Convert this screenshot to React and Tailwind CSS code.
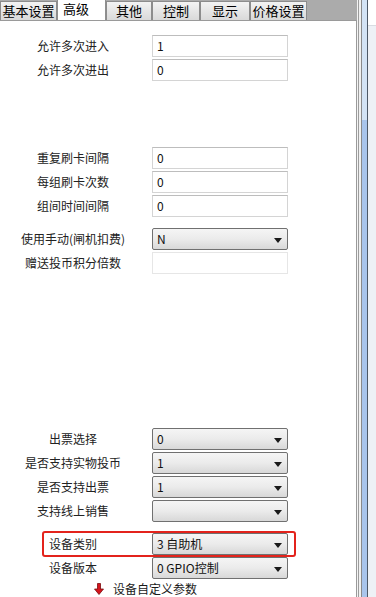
const font = { fontFamily: '"Noto Sans CJK SC", "Liberation Sans", sans-serif' };

const tabs = [
	{ label: "基本设置", w: "w-[57px]" },
	{ label: "高级", w: "w-[49px]", active: true },
	{ label: "其他", w: "w-[46px]" },
	{ label: "控制", w: "w-[48px]" },
	{ label: "显示", w: "w-[50px]" },
	{ label: "价格设置", w: "w-[57px]" },
];

function Caret() {
	return (
		<svg width="8" height="5" viewBox="0 0 8 5" className="absolute right-[5px] top-[9px]">
			<path d="M0 0 H8 L4 5 Z" fill="#1a1a1a" />
		</svg>
	);
}

function Label({ children }) {
	return (
		<div className="w-[146px] shrink-0 text-center text-[12px] leading-[22px] text-[#222]">
			{children}
		</div>
	);
}

function TextBox({ value, faint }) {
	return (
		<div
			className={`ml-[6px] h-[22px] w-[136px] border bg-white pl-[4px] text-[12px] leading-[20px] text-[#111] ${
				faint ? "border-[#e6e6e6]" : "border-[#d4d4d4] border-t-[#bdbdbd]"
			}`}
		>
			{value}
		</div>
	);
}

function Select({ value }) {
	return (
		<div className="relative ml-[6px] h-[22px] w-[136px] rounded-[2px] border border-[#707070] bg-gradient-to-b from-[#f5f5f5] via-[#ebebeb] to-[#d8d8d8] pl-[4px] text-[12px] leading-[20px] text-[#111]">
			{value}
			<Caret />
		</div>
	);
}

function Row({ label, children, className = "" }) {
	return (
		<div className={`flex h-[22px] items-center ${className}`}>
			<Label>{label}</Label>
			{children}
		</div>
	);
}

export default function App() {
	return (
		<div className="flex h-[597px] w-[376px] overflow-hidden bg-white" style={font}>
			<div className="flex w-[357px] flex-col">
				{/* tab strip */}
				<div className="flex h-[20px] items-end bg-[#ababab]">
					{tabs.map((t) =>
						t.active ? (
							<div
								key={t.label}
								className={`${t.w} h-[20px] border-x border-[#8f8f8f] bg-white pl-[5px] text-[13px] leading-[18px] text-black`}
							>
								{t.label}
							</div>
						) : (
							<div
								key={t.label}
								className={`${t.w} h-[19px] border border-b-0 border-[#8c8c8c] bg-gradient-to-b from-[#f3f3f3] to-[#d9d9d9] text-center text-[13px] leading-[18px] text-black`}
							>
								{t.label}
							</div>
						)
					)}
				</div>
				{/* panel */}
				<div className="flex flex-1 flex-col border-r border-t border-[#9a9a9a] bg-white pt-[14px]">
					<Row label="允许多次进入">
						<TextBox value="1" />
					</Row>
					<Row label="允许多次进出" className="mt-[2px]">
						<TextBox value="0" />
					</Row>

					<Row label="重复刷卡间隔" className="mt-[66px]">
						<TextBox value="0" />
					</Row>
					<Row label="每组刷卡次数" className="mt-[2px]">
						<TextBox value="0" />
					</Row>
					<Row label="组间时间间隔" className="mt-[2px]">
						<TextBox value="0" />
					</Row>

					<Row label="使用手动(闸机扣费)" className="mt-[11px]">
						<Select value="N" />
					</Row>
					<Row label="赠送投币积分倍数" className="mt-[2px]">
						<TextBox value="" faint />
					</Row>

					<Row label="出票选择" className="mt-[154px]">
						<Select value="0" />
					</Row>
					<Row label="是否支持实物投币" className="mt-[2px]">
						<Select value="1" />
					</Row>
					<Row label="是否支持出票" className="mt-[2px]">
						<Select value="1" />
					</Row>
					<Row label="支持线上销售" className="mt-[2px]">
						<Select value="" />
					</Row>

					<div className="relative mt-[11px]">
						<Row label="设备类别">
							<Select value="3 自助机" />
						</Row>
						<div className="pointer-events-none absolute left-[42px] top-[-2px] h-[26px] w-[254px] rounded-[3px] border-2 border-[#e3231c]" />
					</div>
					<Row label="设备版本" className="mt-[2px]">
						<Select value="0 GPIO控制" />
					</Row>

					<div className="mt-[2px] flex h-[15px] items-center pl-[94px] text-[12px] leading-[15px] text-[#1a1a1a]">
						<svg width="10" height="12" viewBox="0 0 10 12">
							<path d="M3.5 0.5 H6.5 V6 H9.5 L5 11.5 L0.5 6 H3.5 Z" fill="#d4141c" stroke="#7a0a0e" strokeWidth="0.8" />
						</svg>
						<span className="ml-[9px]">设备自定义参数</span>
					</div>
				</div>
			</div>
			{/* scrollbar strip */}
			<div className="flex w-[19px]">
				<div className="w-[1px] bg-[#f4f4f4]" />
				<div className="w-[1px] bg-[#9c9c9c]" />
				<div className="w-[2px] bg-[#f0f0f0]" />
				<div className="w-[1px] bg-[#8a8a8a]" />
				<div className="flex w-[5px] flex-col">
					<div className="h-[120px] bg-[#d3e3f5]" />
					<div className="flex-1 bg-[#a9c5ec]" />
				</div>
				<div className="w-[1px] bg-[#4d5866]" />
				<div className="flex flex-1 flex-col">
					<div className="h-[26px] border-b border-[#d8dce2] bg-white" />
					<div className="flex-1 bg-[#eef1f6]" />
				</div>
			</div>
		</div>
	);
}
